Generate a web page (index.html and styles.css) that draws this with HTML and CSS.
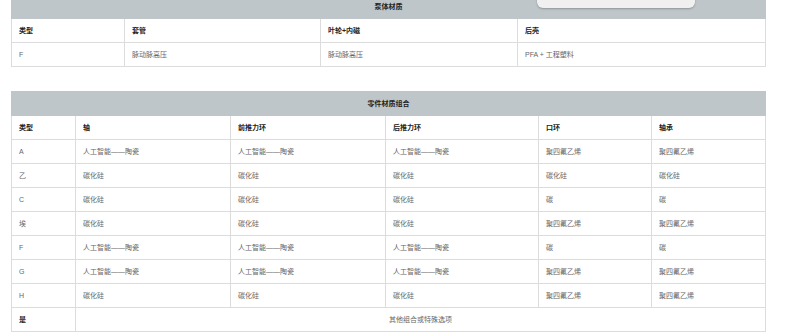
FILE: index.html
```html
<!DOCTYPE html>
<html lang="zh">
<head>
    <meta charset="UTF-8">
    <meta name="viewport" content="width=device-width, initial-scale=1.0">
    <title>材质选项</title>
    <link rel="stylesheet" href="styles.css">
</head>
<body>
    <div class="popup"></div>
    <div class="page">
        <table class="spec first">
            <colgroup>
                <col style="width:113px"><col style="width:196px"><col style="width:197px"><col style="width:248px">
            </colgroup>
            <tr class="caption"><th colspan="4">泵体材质</th></tr>
            <tr class="head"><td>类型</td><td>套管</td><td>叶轮+内磁</td><td>后壳</td></tr>
            <tr><td>F</td><td>脉动脉高压</td><td>脉动脉高压</td><td>PFA + 工程塑料</td></tr>
        </table>

        <table class="spec last">
            <colgroup>
                <col style="width:64px"><col style="width:155px"><col style="width:155px"><col style="width:153px"><col style="width:113px"><col style="width:114px">
            </colgroup>
            <tr class="caption"><th colspan="6">零件材质组合</th></tr>
            <tr class="head"><td>类型</td><td>轴</td><td>前推力环</td><td>后推力环</td><td>口环</td><td>轴承</td></tr>
            <tr><td>A</td><td>人工智能——陶瓷</td><td>人工智能——陶瓷</td><td>人工智能——陶瓷</td><td>聚四氟乙烯</td><td>聚四氟乙烯</td></tr>
            <tr><td>乙</td><td>碳化硅</td><td>碳化硅</td><td>碳化硅</td><td>碳化硅</td><td>碳化硅</td></tr>
            <tr><td>C</td><td>碳化硅</td><td>碳化硅</td><td>碳化硅</td><td>碳</td><td>碳</td></tr>
            <tr><td>埃</td><td>碳化硅</td><td>碳化硅</td><td>碳化硅</td><td>聚四氟乙烯</td><td>聚四氟乙烯</td></tr>
            <tr><td>F</td><td>人工智能——陶瓷</td><td>人工智能——陶瓷</td><td>人工智能——陶瓷</td><td>碳</td><td>碳</td></tr>
            <tr><td>G</td><td>人工智能——陶瓷</td><td>人工智能——陶瓷</td><td>人工智能——陶瓷</td><td>聚四氟乙烯</td><td>聚四氟乙烯</td></tr>
            <tr><td>H</td><td>碳化硅</td><td>碳化硅</td><td>碳化硅</td><td>聚四氟乙烯</td><td>聚四氟乙烯</td></tr>
            <tr><td class="strong">是</td><td colspan="5" class="center">其他组合或特殊选项</td></tr>
        </table>
    </div>
</body>
</html>
```

FILE: styles.css
```css
body {
    margin: 0;
    background: #fff;
    font-family: "Liberation Sans", Arial, "Noto Sans CJK SC", sans-serif;
    font-size: 7px;
    color: #666;
}
.page {
    padding: 0 35px 0 11px;
}
.spec {
    width: 754px;
    border-collapse: collapse;
    table-layout: fixed;
    margin-bottom: 24px;
}
.spec.first {
    margin-top: -6px;
}
.spec.last {
    margin-bottom: 0;
}
.spec th,
.spec td {
    border: 1px solid #dcdcdc;
    height: 24px;
    padding: 0 7px;
    text-align: left;
    vertical-align: middle;
    box-sizing: border-box;
    line-height: 1;
}
.caption th {
    background-color: #bfc6c9;
    color: #222;
    font-weight: bold;
    text-align: center;
    border-color: #bfc6c9;
}
.head td,
.spec td.strong {
    color: #222;
    font-weight: bold;
}
.spec td.center {
    text-align: center;
}
.popup {
    position: absolute;
    top: -10px;
    left: 537px;
    width: 158px;
    height: 18px;
    background: #f0f0f0;
    border-radius: 6px;
    box-shadow: 0 1px 2px rgba(0, 0, 0, 0.25);
    z-index: 1;
}
```
